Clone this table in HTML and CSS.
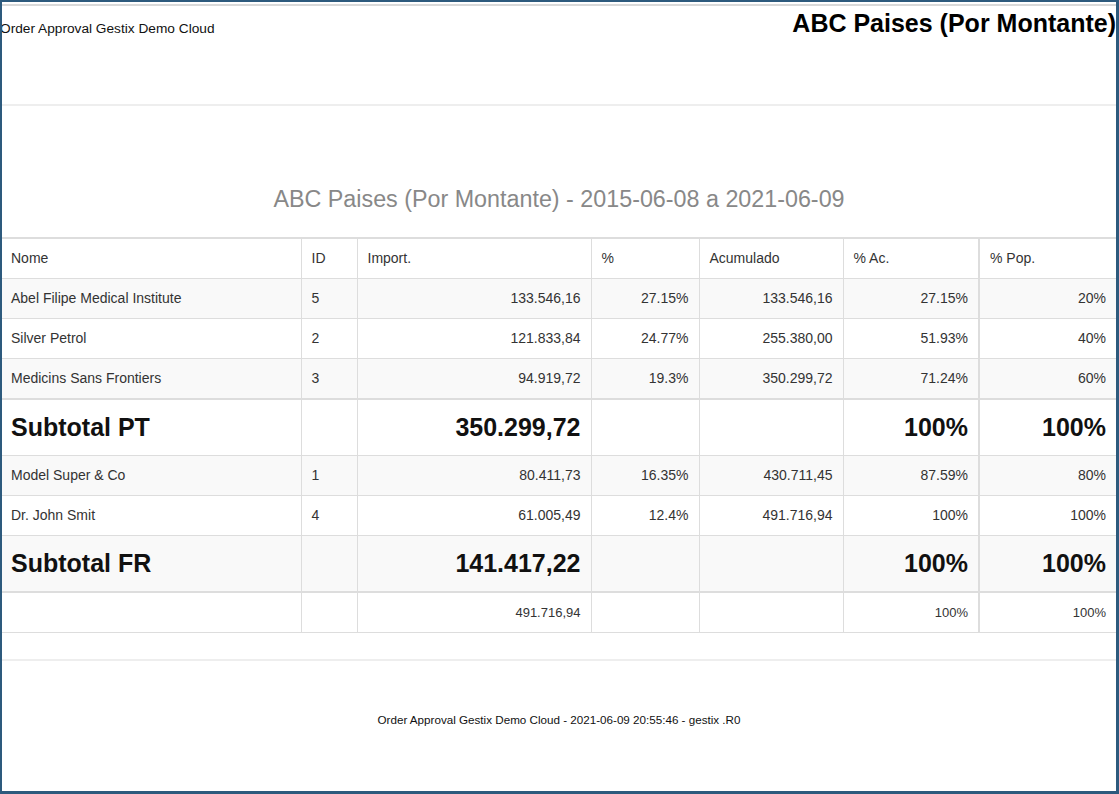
FILE: index.html
```html
<!DOCTYPE html>
<html lang="pt">
<head>
<meta charset="utf-8">
<title>ABC Paises (Por Montante)</title>
<link rel="stylesheet" href="styles.css">
</head>
<body>
<div class="frame">
  <div class="topline"></div>
  <header class="header">
    <div class="company">Order Approval Gestix Demo Cloud</div>
    <h1 class="doc-title">ABC Paises (Por Montante)</h1>
  </header>
  <div class="rule"></div>
  <h2 class="report-title">ABC Paises (Por Montante) - 2015-06-08 a 2021-06-09</h2>
  <table class="grid">
    <colgroup>
      <col class="c-nome"><col class="c-id"><col class="c-imp"><col class="c-pct"><col class="c-acum"><col class="c-pac"><col class="c-pop">
    </colgroup>
    <thead>
      <tr><th>Nome</th><th>ID</th><th>Import.</th><th>%</th><th>Acumulado</th><th class="sep">% Ac.</th><th>% Pop.</th></tr>
    </thead>
    <tbody>
      <tr class="odd"><td>Abel Filipe Medical Institute</td><td>5</td><td class="num">133.546,16</td><td class="num">27.15%</td><td class="num">133.546,16</td><td class="num sep">27.15%</td><td class="num">20%</td></tr>
      <tr><td>Silver Petrol</td><td>2</td><td class="num">121.833,84</td><td class="num">24.77%</td><td class="num">255.380,00</td><td class="num sep">51.93%</td><td class="num">40%</td></tr>
      <tr class="odd"><td>Medicins Sans Frontiers</td><td>3</td><td class="num">94.919,72</td><td class="num">19.3%</td><td class="num">350.299,72</td><td class="num sep">71.24%</td><td class="num">60%</td></tr>
      <tr class="subtotal"><td>Subtotal PT</td><td></td><td class="num">350.299,72</td><td></td><td></td><td class="num sep">100%</td><td class="num">100%</td></tr>
      <tr class="odd"><td>Model Super &amp; Co</td><td>1</td><td class="num">80.411,73</td><td class="num">16.35%</td><td class="num">430.711,45</td><td class="num sep">87.59%</td><td class="num">80%</td></tr>
      <tr><td>Dr. John Smit</td><td>4</td><td class="num">61.005,49</td><td class="num">12.4%</td><td class="num">491.716,94</td><td class="num sep">100%</td><td class="num">100%</td></tr>
      <tr class="subtotal odd last"><td>Subtotal FR</td><td></td><td class="num">141.417,22</td><td></td><td></td><td class="num sep">100%</td><td class="num">100%</td></tr>
    </tbody>
    <tfoot>
      <tr class="total"><td></td><td></td><td class="num">491.716,94</td><td></td><td></td><td class="num sep">100%</td><td class="num">100%</td></tr>
    </tfoot>
  </table>
  <div class="rule bottom"></div>
  <footer class="footer">Order Approval Gestix Demo Cloud - 2021-06-09 20:55:46 - gestix .R0</footer>
</div>
</body>
</html>
```

FILE: styles.css
```css
html, body {
  margin: 0;
  padding: 0;
  background: #ffffff;
}
body {
  font-family: "Liberation Sans", Arial, sans-serif;
  color: #333333;
}
.frame {
  box-sizing: border-box;
  width: 1119px;
  height: 794px;
  border-style: solid;
  border-color: #2d5a7d;
  border-width: 2px 3px 3px 2px;
  overflow: hidden;
  display: flex;
  flex-direction: column;
}
.topline {
  margin-top: 2px;
  border-top: 2px solid #d9d9d9;
}
.header {
  height: 98px;
  display: flex;
  justify-content: space-between;
  align-items: flex-start;
}
.company {
  margin: 15px 0 0 -2px;
  font-size: 13.7px;
  line-height: 16px;
  color: #111111;
}
.doc-title {
  margin: 3px 0 0 0;
  font-size: 25px;
  line-height: 28px;
  font-weight: bold;
  color: #000000;
}
.rule {
  border-top: 2px solid #eeeeee;
}
.report-title {
  margin: 78px 0 23px 0;
  text-align: center;
  font-size: 23.3px;
  line-height: 30px;
  font-weight: normal;
  color: #888888;
}
.grid {
  width: 1114px;
  table-layout: fixed;
  border-collapse: collapse;
  border-top: 2px solid #dddddd;
  font-size: 14px;
}
.c-nome { width: 299px; }
.c-id { width: 56px; }
.c-imp { width: 234px; }
.c-pct { width: 108px; }
.c-acum { width: 144px; }
.c-pac { width: 136px; }
.c-pop { width: 137px; }
.grid th,
.grid td {
  padding: 0 10px 0 10px;
  line-height: 39px;
  height: 39px;
  text-align: left;
  font-weight: normal;
  border: 1px solid #dddddd;
  white-space: nowrap;
  overflow: hidden;
}
.grid tr > :first-child { border-left: none; padding-left: 9px; }
.grid tr > :last-child { border-right: none; }
.grid .sep { border-right: 2px solid #dddddd; }
.grid td.num { text-align: right; }
.grid tr.odd td { background: #f9f9f9; }
.grid tr.subtotal td {
  line-height: 55px;
  height: 55px;
  font-size: 25px;
  font-weight: bold;
  color: #111111;
}
.grid tbody tr:nth-child(4) td { border-top: 2px solid #dddddd; }
.grid tr.last td { border-bottom: 2px solid #dddddd; }
.grid tr.total td { font-size: 13px; }
.rule.bottom {
  margin-top: 26px;
}
.footer {
  margin-top: 51px;
  text-align: center;
  font-size: 11.65px;
  line-height: 16px;
  color: #111111;
}
```
